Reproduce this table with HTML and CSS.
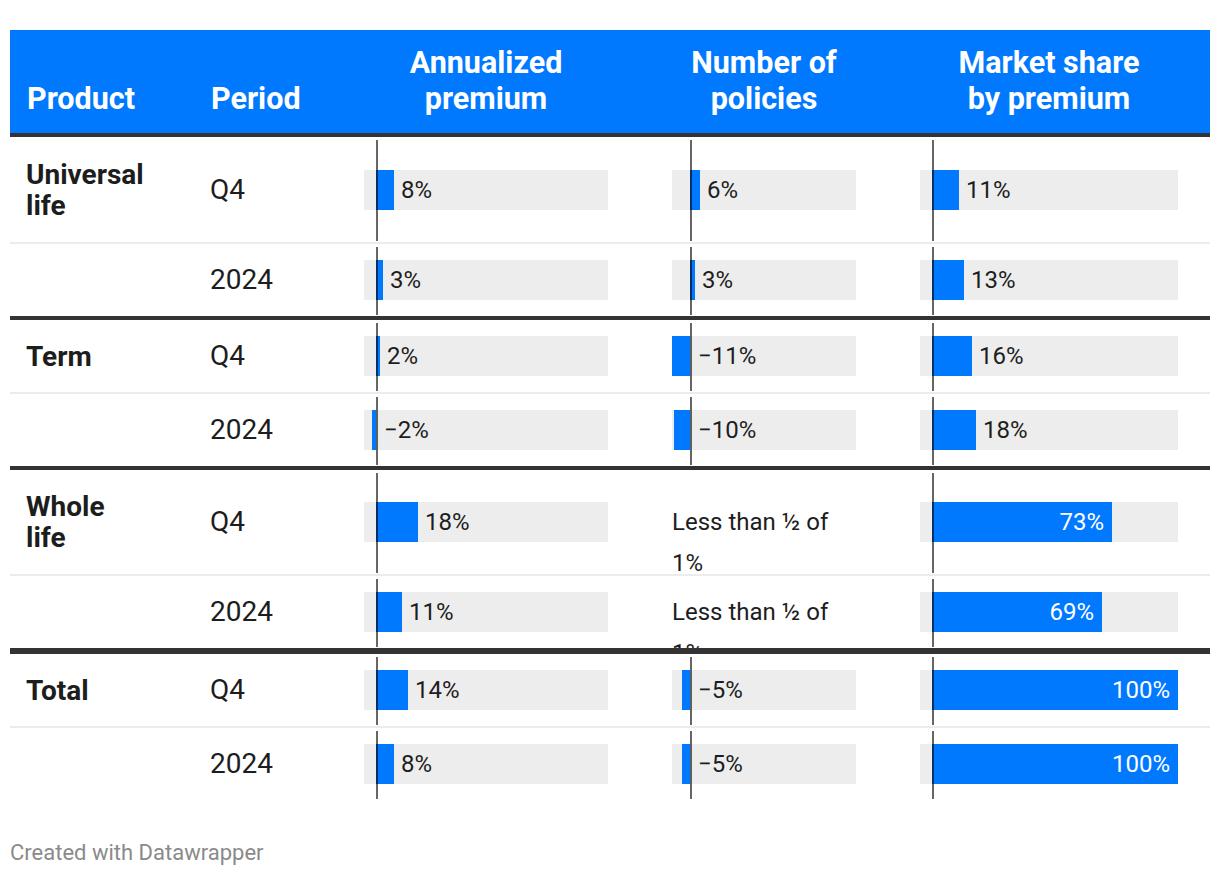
FILE: index.html
```html
<!DOCTYPE html>
<html lang="en">
<head>
<meta charset="utf-8">
<title>Life insurance sales</title>
<link rel="stylesheet" href="styles.css">
</head>
<body>
<div class="chart">
  <div class="table">
    <div class="row head">
      <div class="hcell hleft first-col">Product</div>
      <div class="hcell hleft period-col">Period</div>
      <div class="hcell hcenter">Annualized<br>premium</div>
      <div class="hcell hcenter">Number of<br>policies</div>
      <div class="hcell hcenter">Market share<br>by premium</div>
    </div>

    <div class="row r105">
      <div class="cell product">Universal<br>life</div>
      <div class="cell period">Q4</div>
      <div class="cell barcell ann"><div class="track"><div class="bar" style="left:12px;width:18px"></div><span class="val" style="left:37px">8%</span></div><i class="axis"></i></div>
      <div class="cell barcell pol"><div class="track"><div class="bar" style="left:18px;width:10px"></div><span class="val" style="left:35px">6%</span></div><i class="axis"></i></div>
      <div class="cell barcell mkt"><div class="track"><div class="bar" style="left:12px;width:27px"></div><span class="val" style="left:46px">11%</span></div><i class="axis"></i></div>
    </div>
    <div class="row sep">
      <div class="cell product"></div>
      <div class="cell period">2024</div>
      <div class="cell barcell ann"><div class="track"><div class="bar" style="left:12px;width:7px"></div><span class="val" style="left:26px">3%</span></div><i class="axis"></i></div>
      <div class="cell barcell pol"><div class="track"><div class="bar" style="left:18px;width:5px"></div><span class="val" style="left:30px">3%</span></div><i class="axis"></i></div>
      <div class="cell barcell mkt"><div class="track"><div class="bar" style="left:12px;width:32px"></div><span class="val" style="left:51px">13%</span></div><i class="axis"></i></div>
    </div>

    <div class="row group">
      <div class="cell product">Term</div>
      <div class="cell period">Q4</div>
      <div class="cell barcell ann"><div class="track"><div class="bar" style="left:12px;width:4px"></div><span class="val" style="left:23px">2%</span></div><i class="axis"></i></div>
      <div class="cell barcell pol"><div class="track"><div class="bar" style="left:0px;width:18px"></div><span class="val" style="left:26px">−11%</span></div><i class="axis"></i></div>
      <div class="cell barcell mkt"><div class="track"><div class="bar" style="left:12px;width:40px"></div><span class="val" style="left:59px">16%</span></div><i class="axis"></i></div>
    </div>
    <div class="row sep">
      <div class="cell product"></div>
      <div class="cell period">2024</div>
      <div class="cell barcell ann"><div class="track"><div class="bar" style="left:8px;width:4px"></div><span class="val" style="left:20px">−2%</span></div><i class="axis"></i></div>
      <div class="cell barcell pol"><div class="track"><div class="bar" style="left:2px;width:16px"></div><span class="val" style="left:26px">−10%</span></div><i class="axis"></i></div>
      <div class="cell barcell mkt"><div class="track"><div class="bar" style="left:12px;width:44px"></div><span class="val" style="left:63px">18%</span></div><i class="axis"></i></div>
    </div>

    <div class="row group r104">
      <div class="cell product">Whole<br>life</div>
      <div class="cell period">Q4</div>
      <div class="cell barcell ann"><div class="track"><div class="bar" style="left:12px;width:42px"></div><span class="val" style="left:61px">18%</span></div><i class="axis"></i></div>
      <div class="cell barcell pol"><div class="note">Less than ½ of 1%</div></div>
      <div class="cell barcell mkt"><div class="track"><div class="bar" style="left:12px;width:180px"><span class="val in">73%</span></div></div><i class="axis"></i></div>
    </div>
    <div class="row sep">
      <div class="cell product"></div>
      <div class="cell period">2024</div>
      <div class="cell barcell ann"><div class="track"><div class="bar" style="left:12px;width:26px"></div><span class="val" style="left:45px">11%</span></div><i class="axis"></i></div>
      <div class="cell barcell pol"><div class="note">Less than ½ of 1%</div></div>
      <div class="cell barcell mkt"><div class="track"><div class="bar" style="left:12px;width:170px"><span class="val in">69%</span></div></div><i class="axis"></i></div>
    </div>

    <div class="row total">
      <div class="cell product">Total</div>
      <div class="cell period">Q4</div>
      <div class="cell barcell ann"><div class="track"><div class="bar" style="left:12px;width:32px"></div><span class="val" style="left:51px">14%</span></div><i class="axis"></i></div>
      <div class="cell barcell pol"><div class="track"><div class="bar" style="left:10px;width:8px"></div><span class="val" style="left:26px">−5%</span></div><i class="axis"></i></div>
      <div class="cell barcell mkt"><div class="track"><div class="bar" style="left:12px;width:246px"><span class="val in">100%</span></div></div><i class="axis"></i></div>
    </div>
    <div class="row sep">
      <div class="cell product"></div>
      <div class="cell period">2024</div>
      <div class="cell barcell ann"><div class="track"><div class="bar" style="left:12px;width:18px"></div><span class="val" style="left:37px">8%</span></div><i class="axis"></i></div>
      <div class="cell barcell pol"><div class="track"><div class="bar" style="left:10px;width:8px"></div><span class="val" style="left:26px">−5%</span></div><i class="axis"></i></div>
      <div class="cell barcell mkt"><div class="track"><div class="bar" style="left:12px;width:246px"><span class="val in">100%</span></div></div><i class="axis"></i></div>
    </div>
  </div>
  <div class="footer">Created with Datawrapper</div>
</div>
</body>
</html>
```

FILE: styles.css
```css
* { box-sizing: border-box; }

html, body {
  margin: 0;
  padding: 0;
  background: #ffffff;
}

body {
  font-family: Roboto, "Liberation Sans", Arial, sans-serif;
  color: #1d1d1d;
}

.chart {
  padding: 30px 10px 0 10px;
}

.table {
  width: 1200px;
}

.row {
  display: grid;
  grid-template-columns: 185px 137px 308px 248px 322px;
  grid-template-rows: 100%;
  height: 72px;
  overflow: hidden;
  box-sizing: content-box;
  background: #ffffff;
}

.row.r105 { height: 105px; }
.row.r104 { height: 104px; }

.row.sep { border-top: 2px solid #ececec; }
.row.group { border-top: 4px solid #333333; }
.row.total { border-top: 6px solid #333333; }

/* header */
.row.head {
  height: 103px;
  background: #0079ff;
  border-bottom: 4px solid #333333;
}

.hcell {
  align-self: end;
  color: #ffffff;
  font-weight: 700;
  font-size: 30.5px;
  line-height: 36px;
  padding-bottom: 16px;
}

.hleft { text-align: left; }
.hcenter { text-align: center; padding-left: 32px; padding-right: 32px; }
.first-col { padding-left: 17px; }
.period-col { padding-left: 16px; }

/* body cells */
.cell {
  display: flex;
  align-items: center;
  position: relative;
  min-height: 0;
}

.product {
  padding-left: 16px;
  font-weight: 700;
  font-size: 28px;
  line-height: 31px;
}

.period {
  padding-left: 15px;
  font-size: 28px;
  line-height: 32px;
}

.barcell {
  padding: 0 32px;
}

.track {
  position: relative;
  width: 100%;
  height: 40px;
  background: #ededed;
}

.bar {
  position: absolute;
  top: 0;
  height: 40px;
  background: #0079ff;
}

.val {
  position: absolute;
  top: 0;
  font-size: 24px;
  line-height: 40px;
  white-space: nowrap;
  color: #1d1d1d;
}

.val.in {
  right: 8px;
  color: #ffffff;
}

.axis {
  position: absolute;
  top: 3px;
  bottom: 1px;
  width: 2px;
  background: rgba(0, 0, 0, 0.6);
}

.ann .axis { left: 44px; }
.pol .axis { left: 50px; }
.mkt .axis { left: 44px; }

.note {
  align-self: flex-start;
  margin-top: 16px;
  width: 100%;
  font-size: 24px;
  line-height: 41px;
}

.r104 .note { margin-top: 32px; }

.footer {
  margin-top: 40px;
  font-size: 22px;
  line-height: 26px;
  color: #8a8a8a;
}
```
